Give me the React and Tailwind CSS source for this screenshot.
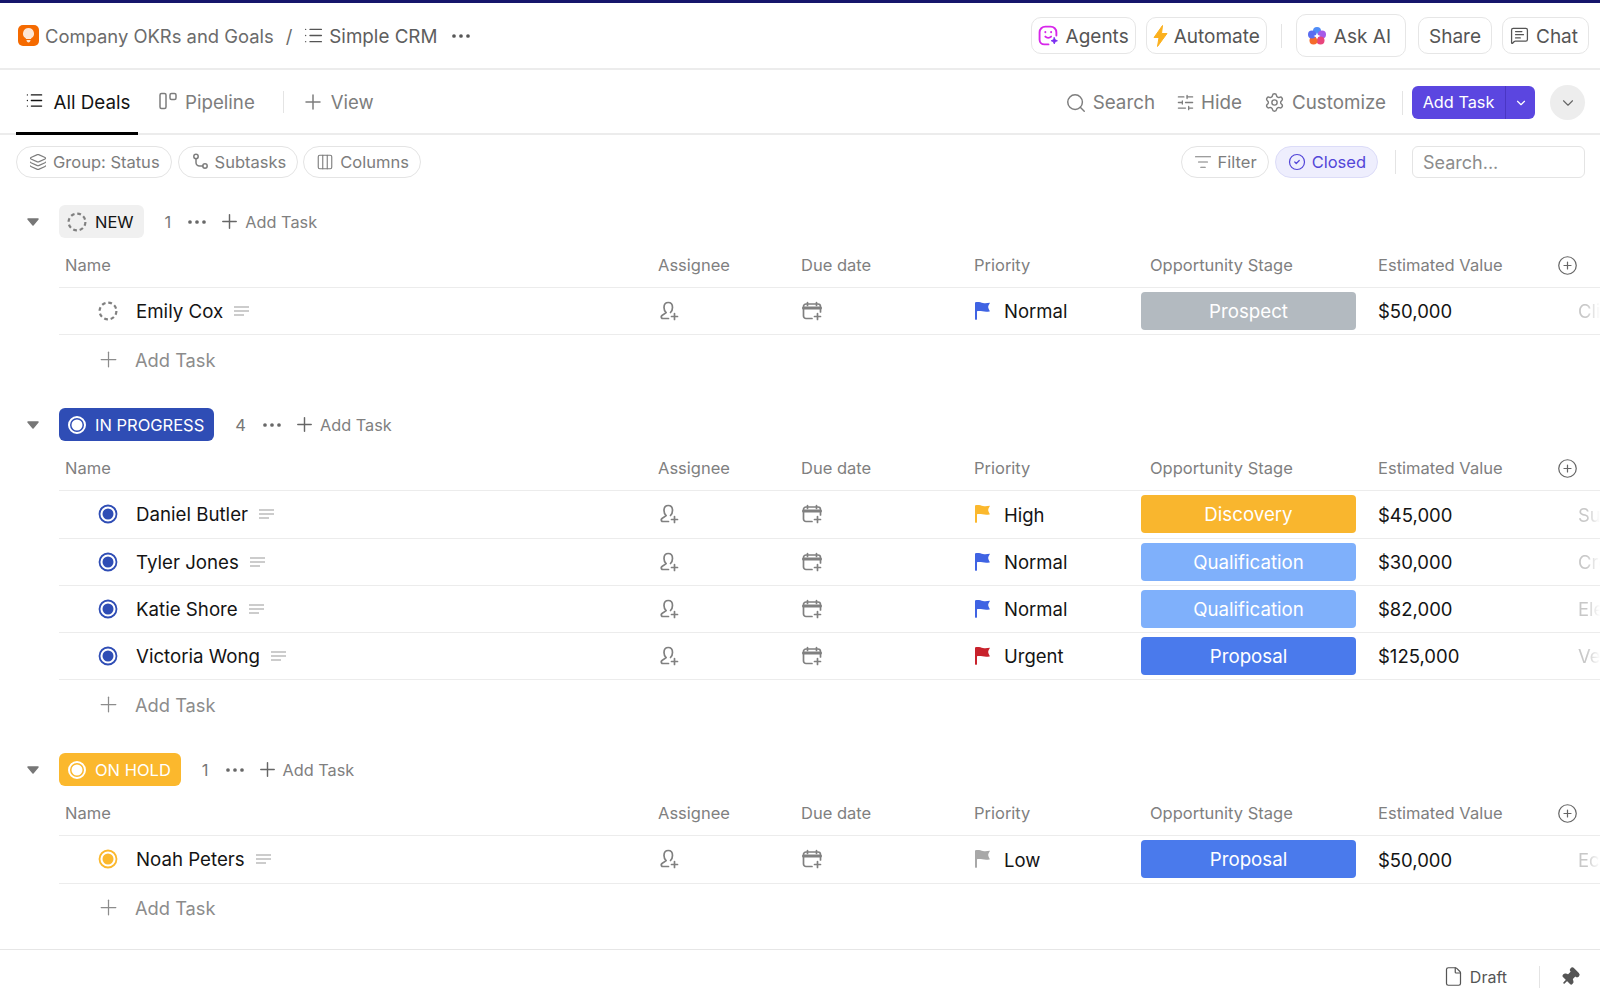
import { List, Plus, Ellipsis, Search, SlidersHorizontal, Settings, ChevronDown, Layers, Columns3, ListFilter, CircleCheck, CirclePlus, File, Pin, MessageSquareText } from 'lucide-react'

const GRID = "grid grid-cols-[599px_143px_172px_168px_215px_1fr] ml-[59px]"

function Flag({ color }) {
  return (
    <svg width="18" height="20" viewBox="0 0 18 20" fill={color}>
      <path d="M1 1.500c3-1 5.500 0 8 .5 2 .3 4 .2 7-.3-.9 1.800-1.800 3-1.800 4.300s.9 2.800 1.800 4.300c-3 .8-5.500.5-7.500 0-2-.5-4.500-.5-5.500-.1L3 18.300c0 .7-2 .7-2 0z" />
    </svg>
  )
}

function NoteIcon() {
  return (
    <svg width="15" height="10" viewBox="0 0 15 10" fill="none" stroke="#9a9a9a" strokeWidth="1.200" className="ml-[11px]">
      <path d="M0 1h15M0 5h15M0 9h10" />
    </svg>
  )
}

function AssigneeIcon() {
  return (
    <svg width="20" height="20" viewBox="0 0 20 20" fill="none" stroke="#808080" strokeWidth="1.700" strokeLinecap="round" strokeLinejoin="round">
      <path d="M7 11.500C5.500 10 5 8.500 5 6.500 5 3.500 6.800 1.500 9.300 1.500s4.200 2 4.200 5c0 2-.5 3.500-2 5" />
      <path d="M7 11.500c0 1-3.500 1.800-4.500 3.500-.7 1.300 0 2.500 1.500 2.500h5.500" />
      <path d="M15.500 12.500v6M12.500 15.500h6" />
    </svg>
  )
}

function DateIcon() {
  return (
    <svg width="20" height="20" viewBox="0 0 20 20" fill="none" stroke="#808080" strokeWidth="1.700" strokeLinecap="round" strokeLinejoin="round">
      <path d="M10 17.500H4a2.500 2.500 0 0 1-2.500-2.500V5.500A2.500 2.500 0 0 1 4 3h12a2.500 2.500 0 0 1 2.500 2.500V11" />
      <path d="M1.500 7h17" strokeWidth="3" />
      <path d="M5.500 1.500v3M14.500 1.500v3" />
      <path d="M15.500 12.500v6M12.500 15.500h6" />
    </svg>
  )
}

function StatusIcon({ color, dashed }) {
  if (dashed) {
    return (
      <svg width="20" height="20" viewBox="0 0 20 20" fill="none">
        <circle cx="10" cy="10" r="8.400" stroke="#808080" strokeWidth="2.200" strokeDasharray="3.800 2.800" />
      </svg>
    )
  }
  return (
    <svg width="20" height="20" viewBox="0 0 20 20" fill="none">
      <circle cx="10" cy="10" r="8.500" stroke={color} strokeWidth="1.800" />
      <circle cx="10" cy="10" r="5.500" fill={color} />
    </svg>
  )
}

function ChipIcon() {
  return (
    <svg width="20" height="20" viewBox="0 0 20 20" fill="none">
      <circle cx="10" cy="10" r="8" stroke="white" strokeWidth="2" />
      <circle cx="10" cy="10" r="5.500" fill="white" />
    </svg>
  )
}

function Row({ task }) {
  return (
    <div className={GRID + " h-[47.250px] border-b border-[#ececec] items-center"}>
      <div className="flex items-center pl-[39px]">
        <StatusIcon color={task.color} dashed={task.dashed} />
        <span className="ml-[18px] pt-[2px] text-[18.700px] text-[#141414]">{task.name}</span>
        <NoteIcon />
      </div>
      <div className="pl-[1px]"><AssigneeIcon /></div>
      <div className="pl-[1px]"><DateIcon /></div>
      <div className="flex items-center gap-[12px] pl-[1px]">
        <Flag color={task.flag} />
        <span className="pt-[2px] text-[18.500px] text-[#141414]">{task.priority}</span>
      </div>
      <div className={"h-[38px] pt-[2px] rounded-[4px] flex items-center justify-center text-white text-[18.700px] " + task.stageColor}>{task.stage}</div>
      <div className="flex pl-[22px] pt-[2px] text-[18.500px] text-[#141414] overflow-hidden whitespace-nowrap">
        <span className="w-[200px] shrink-0">{task.value}</span>
        <span className="w-[23px] overflow-hidden text-[#c8c8c8] [mask-image:linear-gradient(to_right,black_40%,transparent)]">{task.note}</span>
      </div>
    </div>
  )
}

function Group({ chip, chipClass, count, tasks, icon }) {
  return (
    <div className="mb-[25px]">
      <div className="flex items-center h-[33px] text-[16.500px]">
        <svg width="14" height="10" viewBox="0 0 14 10" className="ml-[26px] mr-[19px]" fill="#777"><path d="M2 2h10L7 8z" stroke="#777" strokeWidth="1.500" strokeLinejoin="round" /></svg>
        <div className={"h-[33px] rounded-[6px] flex items-center pl-[8px] pr-[10px] gap-[8px] " + chipClass}>
          {icon}
          <span className="pt-[2px]">{chip}</span>
        </div>
        <span className="ml-[21px] pt-[2px] text-[#777]">{count}</span>
        <Ellipsis size={24} color="#666" strokeWidth={1.700} className="ml-[14px]" />
        <Plus size={23} color="#666" strokeWidth={1.500} className="ml-[9px]" />
        <span className="ml-[4px] pt-[1px] text-[16.300px] text-[#808080]">Add Task</span>
      </div>
      <div className={GRID + " h-[50px] pt-[6px] border-b border-[#ececec] items-center text-[16.500px] text-[#808080]"}>
        <div className="pl-[6px]">Name</div>
        <div>Assignee</div>
        <div>Due date</div>
        <div className="pl-[1px]">Priority</div>
        <div className="pl-[9px]">Opportunity Stage</div>
        <div className="flex items-center pl-[22px]">
          <span className="w-[179px] shrink-0">Estimated Value</span>
          <CirclePlus size={21} color="#666" strokeWidth={1.400} />
        </div>
      </div>
      {tasks.map((t) => <Row key={t.name} task={t} />)}
      <div className="flex items-center h-[48px] ml-[59px] pl-[37px] text-[18.300px] text-[#8c8c8c]">
        <Plus size={25} color="#8c8c8c" strokeWidth={1.200} />
        <span className="ml-[14px] pt-[2px]">Add Task</span>
      </div>
    </div>
  )
}

const BLUE = "#2f4db5"
const BLUEFLAG = "#3f63e3"
const YELLOW = "#fbb82d"

const newTasks = [
  { name: "Emily Cox", dashed: true, flag: BLUEFLAG, priority: "Normal", stage: "Prospect", stageColor: "bg-[#b3bac0]", value: "$50,000", note: "Client" },
]
const progressTasks = [
  { name: "Daniel Butler", color: BLUE, flag: YELLOW, priority: "High", stage: "Discovery", stageColor: "bg-[#f9b62e]", value: "$45,000", note: "Supplier" },
  { name: "Tyler Jones", color: BLUE, flag: BLUEFLAG, priority: "Normal", stage: "Qualification", stageColor: "bg-[#7fb0fb]", value: "$30,000", note: "Creative" },
  { name: "Katie Shore", color: BLUE, flag: BLUEFLAG, priority: "Normal", stage: "Qualification", stageColor: "bg-[#7fb0fb]", value: "$82,000", note: "Electronics" },
  { name: "Victoria Wong", color: BLUE, flag: "#c8222c", priority: "Urgent", stage: "Proposal", stageColor: "bg-[#4a7aec]", value: "$125,000", note: "Venture" },
]
const holdTasks = [
  { name: "Noah Peters", color: YELLOW, flag: "#a8a8a8", priority: "Low", stage: "Proposal", stageColor: "bg-[#4a7aec]", value: "$50,000", note: "Ecommerce" },
]

function Pill({ children }) {
  return <div className="h-[32px] rounded-full border border-[#e4e4e4] flex items-center gap-[6px] pl-[12px] pr-[11px] text-[16.500px] text-[#7d7d7d]">{children}</div>
}

function TopButton({ children, className }) {
  return <div className={"h-[37px] rounded-[10px] border border-[#e6e6e6] flex items-center text-[19px] text-[#555] " + (className || "")}>{children}</div>
}

export default function App() {
  return (
    <div className="h-[1003px] w-[1600px] overflow-hidden bg-white flex flex-col font-['Inter',sans-serif]">
      <div className="h-[3px] bg-[#15156b] shrink-0"></div>

      {/* breadcrumb bar */}
      <div className="h-[67px] shrink-0 border-b-2 border-[#ececec] flex items-center pl-[18px] pr-[11px]">
        <div className="w-[21px] h-[21px] rounded-[5px] bg-[#f56a00] flex items-center justify-center">
          <svg width="13" height="15" viewBox="0 0 13 15" fill="#fde6d5"><path d="M6.500 0a5.500 5.500 0 0 1 3 10.100c-.3.200-.5.500-.5.900H4c0-.4-.2-.7-.5-.9A5.500 5.500 0 0 1 6.500 0zM4.500 12h4c0 1.500-1 2.500-2 2.500s-2-1-2-2.500z" /></svg>
        </div>
        <span className="ml-[6px] pt-[2px] text-[18.400px] text-[#6b6b6b]">Company OKRs and Goals</span>
        <span className="ml-[12px] pt-[2px] text-[18.500px] text-[#6b6b6b]">/</span>
        <List size={21} color="#555" strokeWidth={1.600} className="ml-[11px]" />
        <span className="ml-[5px] pt-[3px] text-[18.800px] text-[#5e5e5e]">Simple CRM</span>
        <Ellipsis size={24} color="#555" strokeWidth={1.700} className="ml-[12px]" />

        <div className="ml-auto flex items-center">
          <TopButton className="pl-[6px] pr-[6px] gap-[7px]">
            <svg width="21" height="21" viewBox="0 0 20 20" fill="none" stroke="#d726ea" strokeWidth="1.800" strokeLinecap="round"><path d="M10 18.500H6A4.500 4.500 0 0 1 1.500 14V7A5.500 5.500 0 0 1 7 1.500h5A5.500 5.500 0 0 1 17.500 7v3" /><path d="M7 6.500v.5M12.500 6.500v.5M7 11c1.500 1.500 4 1.500 5.500 0" /><path d="M15.500 12l.9 2.100 2.100.9-2.100.9-.9 2.100-.9-2.100-2.100-.9 2.100-.9z" fill="#7b2ff0" stroke="#7b2ff0" strokeWidth=".8" /></svg>
            <span className="pt-[3px]">Agents</span>
          </TopButton>
          <TopButton className="ml-[10px] pl-[6px] pr-[6px] gap-[6px]">
            <svg width="15" height="22" viewBox="0 0 15 22" fill="#fbb01e"><path d="M9.500 0.500 1 12.500h5L4.500 21.500 14 8.500H8.500z" strokeLinejoin="round" stroke="#fbb01e" /></svg>
            <span className="pt-[3px]">Automate</span>
          </TopButton>
          <div className="ml-[14px] w-px h-[24px] bg-[#e4e4e4]"></div>
          <TopButton className="ml-[14px] h-[43px] gap-[7px] pl-[10px] pr-[14px]">
            <svg width="20" height="20" viewBox="0 0 20 20">
              <circle cx="10" cy="5" r="4" fill="#4f8df7" />
              <circle cx="15" cy="8.500" r="4" fill="#a55be8" />
              <circle cx="13.500" cy="14.500" r="4" fill="#e8457c" />
              <circle cx="6.500" cy="14.500" r="4" fill="#f56a2b" />
              <circle cx="5" cy="8.500" r="4" fill="#5a6cf0" />
              <path d="M10 6.500l1 2.500 2.500 1-2.500 1-1 2.500-1-2.500-2.500-1 2.500-1z" fill="white" />
            </svg>
            <span className="pt-[3px]">Ask AI</span>
          </TopButton>
          <TopButton className="ml-[12px] px-[10px]"><span className="pt-[3px]">Share</span></TopButton>
          <TopButton className="ml-[10px] gap-[7px] pl-[7px] pr-[10px]">
            <MessageSquareText size={19} color="#555" strokeWidth={1.600} />
            <span className="pt-[3px]">Chat</span>
          </TopButton>
        </div>
      </div>

      {/* views bar */}
      <div className="h-[65px] shrink-0 border-b-2 border-[#ececec] flex items-center pl-[16px] pr-[15px]">
        <div className="h-[65px] w-[122px] border-b-[3px] border-black -mb-[1px] flex items-center justify-center gap-[9px] text-[18.800px] text-[#141414]">
          <List size={19} color="#141414" strokeWidth={1.600} className="ml-[2px]" />
          <span className="pt-[5px]">All Deals</span>
        </div>
        <div className="ml-[21px] flex items-center gap-[8px] text-[18.700px] text-[#7d7d7d]">
          <svg width="18" height="18" viewBox="0 0 18 18" fill="none" stroke="#7d7d7d" strokeWidth="1.500"><rect x="1" y="1.500" width="6" height="15" rx="1.500" /><rect x="11" y="1.500" width="6" height="6" rx="1.500" /></svg>
          <span className="pt-[3px]">Pipeline</span>
        </div>
        <div className="ml-[28px] w-px h-[22px] bg-[#e4e4e4]"></div>
        <Plus size={24} color="#7d7d7d" strokeWidth={1.500} className="ml-[17px]" />
        <span className="ml-[6px] pt-[2px] text-[18.500px] text-[#7d7d7d]">View</span>

        <div className="ml-auto mt-[2px] flex items-center text-[18.800px] text-[#7d7d7d]">
          <Search size={22} strokeWidth={1.600} />
          <span className="ml-[6px] pt-[2px]">Search</span>
          <SlidersHorizontal size={19} strokeWidth={1.600} className="ml-[21px]" />
          <span className="ml-[6px] pt-[2px]">Hide</span>
          <Settings size={21} strokeWidth={1.600} className="ml-[22px]" />
          <span className="ml-[7px] pt-[2px]">Customize</span>
          <div className="ml-[16px] w-px h-[24px] bg-[#e4e4e4]"></div>
          <div className="ml-[9px] h-[33px] w-[123px] rounded-[6px] bg-[#5b46e0] flex items-center text-white text-[16.300px]">
            <span className="w-[94px] text-center border-r border-[#4a36c4] leading-[33px]">Add Task</span>
            <ChevronDown size={14} color="white" className="ml-[8px]" />
          </div>
          <div className="ml-[15px] w-[35px] h-[35px] rounded-full bg-[#ededed] flex items-center justify-center">
            <ChevronDown size={18} color="#666" strokeWidth={1.500} />
          </div>
        </div>
      </div>

      {/* filters */}
      <div className="h-[43px] shrink-0 flex items-end pl-[16px] pr-[15px]">
        <div className="pr-[1px]"><Pill><Layers size={18} strokeWidth={1.500} /><span className="pt-[1px]">Group: Status</span></Pill></div>
        <div className="ml-[5px]"><Pill>
          <svg width="18" height="18" viewBox="0 0 18 18" fill="none" stroke="#7d7d7d" strokeWidth="1.500" strokeLinecap="round"><circle cx="5" cy="3.500" r="2.200" /><circle cx="14" cy="13" r="2.200" /><path d="M5 5.700v3.800a3.500 3.500 0 0 0 3.500 3.500h3.300" /></svg>
          <span className="pt-[1px]">Subtasks</span></Pill></div>
        <div className="ml-[5px]"><Pill><Columns3 size={18} strokeWidth={1.500} /><span className="pt-[1px]">Columns</span></Pill></div>
        <div className="ml-auto flex items-center">
          <Pill><ListFilter size={18} strokeWidth={1.500} /><span className="pt-[1px]">Filter</span></Pill>
          <div className="ml-[6px] h-[32px] rounded-full border border-[#dcdcf8] bg-[#eeeefd] flex items-center gap-[6px] pl-[12px] pr-[11px] text-[16.500px] text-[#5346d8]">
            <CircleCheck size={18} strokeWidth={1.600} />
            <span className="pt-[1px]">Closed</span>
          </div>
          <div className="ml-[17px] w-px h-[24px] bg-[#e4e4e4]"></div>
          <div className="ml-[16px] h-[32px] w-[173px] rounded-[6px] border border-[#e4e4e4] flex items-center pl-[10px] pt-[1px] text-[18px] text-[#8c8c8c]">Search...</div>
        </div>
      </div>

      {/* groups */}
      <div className="flex-1 pt-[27px] overflow-hidden">
        <Group chip="NEW" chipClass="bg-[#f0f0f0] text-[#141414]" count="1" tasks={newTasks} icon={<StatusIcon dashed />} />
        <Group chip="IN PROGRESS" chipClass="bg-[#2f4db5] text-white" count="4" tasks={progressTasks} icon={<ChipIcon />} />
        <Group chip="ON HOLD" chipClass="bg-[#fbb82d] text-white" count="1" tasks={holdTasks} icon={<ChipIcon />} />
      </div>

      {/* footer */}
      <div className="h-[54px] shrink-0 border-t border-[#e6e6e6] flex items-center justify-end pr-[20px] text-[16px] text-[#555]">
        <File size={21} strokeWidth={1.400} />
        <span className="ml-[6px]">Draft</span>
        <div className="ml-[32px] w-px h-[22px] bg-[#e4e4e4]"></div>
        <Pin size={20} color="#555" fill="#555" className="ml-[20px] rotate-45" />
      </div>
    </div>
  )
}
